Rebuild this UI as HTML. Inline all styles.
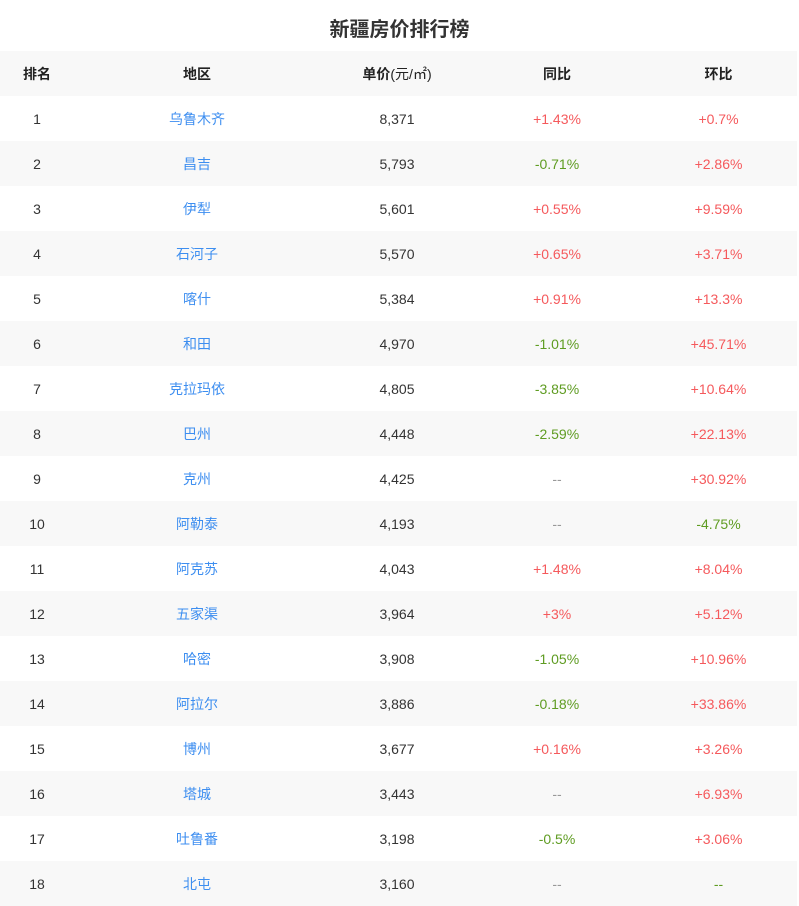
<!DOCTYPE html>
<html><head><meta charset="utf-8"><style>
body{margin:0;background:#fff;font-family:"Liberation Sans","Noto Sans CJK SC",sans-serif;width:799px;overflow:hidden}
h1{margin:0;height:51px;line-height:60px;text-align:center;font-size:20px;font-weight:bold;color:#333}
table{border-collapse:collapse;width:797px;table-layout:fixed;font-size:14px;color:#333}
td,th{height:45px;padding:0;text-align:center}
th{font-weight:bold;color:#222}
tr:nth-child(odd){background:#f8f8f8}
.b{color:#3d8ef0}.r{color:#f5595c}.g{color:#5f9c22}.n{color:#999}
</style></head><body>
<h1>新疆房价排行榜</h1>
<table>
<colgroup><col style="width:74px"><col style="width:246px"><col style="width:154px"><col style="width:166px"><col style="width:157px"></colgroup>
<tr><th>排名</th><th>地区</th><th>单价<span style="font-weight:normal">(元/㎡)</span></th><th>同比</th><th>环比</th></tr>
<tr><td>1</td><td class="b">乌鲁木齐</td><td>8,371</td><td class="r">+1.43%</td><td class="r">+0.7%</td></tr>
<tr><td>2</td><td class="b">昌吉</td><td>5,793</td><td class="g">-0.71%</td><td class="r">+2.86%</td></tr>
<tr><td>3</td><td class="b">伊犁</td><td>5,601</td><td class="r">+0.55%</td><td class="r">+9.59%</td></tr>
<tr><td>4</td><td class="b">石河子</td><td>5,570</td><td class="r">+0.65%</td><td class="r">+3.71%</td></tr>
<tr><td>5</td><td class="b">喀什</td><td>5,384</td><td class="r">+0.91%</td><td class="r">+13.3%</td></tr>
<tr><td>6</td><td class="b">和田</td><td>4,970</td><td class="g">-1.01%</td><td class="r">+45.71%</td></tr>
<tr><td>7</td><td class="b">克拉玛依</td><td>4,805</td><td class="g">-3.85%</td><td class="r">+10.64%</td></tr>
<tr><td>8</td><td class="b">巴州</td><td>4,448</td><td class="g">-2.59%</td><td class="r">+22.13%</td></tr>
<tr><td>9</td><td class="b">克州</td><td>4,425</td><td class="n">--</td><td class="r">+30.92%</td></tr>
<tr><td>10</td><td class="b">阿勒泰</td><td>4,193</td><td class="n">--</td><td class="g">-4.75%</td></tr>
<tr><td>11</td><td class="b">阿克苏</td><td>4,043</td><td class="r">+1.48%</td><td class="r">+8.04%</td></tr>
<tr><td>12</td><td class="b">五家渠</td><td>3,964</td><td class="r">+3%</td><td class="r">+5.12%</td></tr>
<tr><td>13</td><td class="b">哈密</td><td>3,908</td><td class="g">-1.05%</td><td class="r">+10.96%</td></tr>
<tr><td>14</td><td class="b">阿拉尔</td><td>3,886</td><td class="g">-0.18%</td><td class="r">+33.86%</td></tr>
<tr><td>15</td><td class="b">博州</td><td>3,677</td><td class="r">+0.16%</td><td class="r">+3.26%</td></tr>
<tr><td>16</td><td class="b">塔城</td><td>3,443</td><td class="n">--</td><td class="r">+6.93%</td></tr>
<tr><td>17</td><td class="b">吐鲁番</td><td>3,198</td><td class="g">-0.5%</td><td class="r">+3.06%</td></tr>
<tr><td>18</td><td class="b">北屯</td><td>3,160</td><td class="n">--</td><td class="g">--</td></tr>
</table>
</body></html>
